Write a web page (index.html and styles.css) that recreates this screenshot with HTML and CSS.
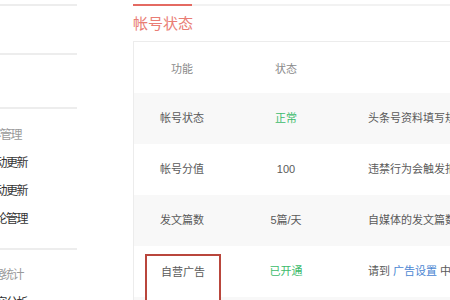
FILE: index.html
```html
<!DOCTYPE html>
<html>
<head>
    <meta charset="UTF-8">
    <title>帐号状态</title>
    <link rel="stylesheet" href="styles.css">
</head>
<body>
<div id="page">
    <div class="side">
        <div class="blank b1"></div>
        <div class="blank b2"></div>
        <div class="blank b3"></div>
        <div class="group">
            <p class="gtitle"><span>内容管理</span></p>
            <p class="item"><span>图文自动更新</span></p>
            <p class="item"><span>视频自动更新</span></p>
            <p class="item"><span>评论管理</span></p>
        </div>
        <div class="group last">
            <p class="gtitle"><span>数据统计</span></p>
            <p class="item"><span>内容分析</span></p>
        </div>
    </div>
    <div class="main">
        <div class="tabs">
            <span class="tab on"></span>
        </div>
        <h2 class="title">帐号状态</h2>
        <div class="card">
            <ul class="row head">
                <li class="c1">功能</li>
                <li class="c2">状态</li>
                <li class="c3"></li>
            </ul>
            <ul class="row gray">
                <li class="c1">帐号状态</li>
                <li class="c2 ok">正常</li>
                <li class="c3">头条号资料填写规范，帐号状态正常</li>
            </ul>
            <ul class="row">
                <li class="c1">帐号分值</li>
                <li class="c2">100</li>
                <li class="c3">违禁行为会触发扣分，分值过低将受限</li>
            </ul>
            <ul class="row gray">
                <li class="c1">发文篇数</li>
                <li class="c2">5篇/天</li>
                <li class="c3">自媒体的发文篇数每天上限</li>
            </ul>
            <ul class="row ad">
                <li class="c1"><span class="mark">自营广告</span></li>
                <li class="c2 ok">已开通</li>
                <li class="c3">请到 <a class="link">广告设置</a> 中进行设置</li>
            </ul>
            <ul class="row gray">
                <li class="c1"></li>
                <li class="c2"></li>
                <li class="c3"></li>
            </ul>
        </div>
    </div>
</div>
</body>
</html>
```

FILE: styles.css
```css
* {
    margin: 0;
    padding: 0;
    font-family: "Liberation Sans", "Noto Sans CJK SC", sans-serif;
}

li {
    list-style: none;
}

html, body {
    width: 450px;
    height: 300px;
    overflow: hidden;
    background: #fff;
}

#page {
    display: flex;
    width: 800px;
}

/* 左侧菜单 */
.side {
    width: 121px;
    margin-left: -44px;
    flex-shrink: 0;
}

.side .blank {
    border-bottom: 2px solid #ededed;
}

.side .b1 {
    height: 4px;
}

.side .b2 {
    height: 47px;
}

.side .b3 {
    height: 52px;
}

.side .group {
    padding-bottom: 15px;
    border-bottom: 2px solid #ededed;
}

.side .group.last {
    border-bottom: none;
}

.side .gtitle,
.side .item {
    display: flex;
    justify-content: flex-end;
    line-height: 28px;
    font-size: 12px;
    letter-spacing: -1.5px;
    white-space: nowrap;
}

.side .gtitle span,
.side .item span {
    flex-shrink: 0;
}

.side .gtitle {
    margin-top: 12px;
    padding-right: 56px;
    color: #9a9a9a;
}

.side .group.last .gtitle {
    margin-top: 11px;
    padding-right: 54px;
}

.side .item {
    padding-right: 50px;
    color: #333;
}

/* 右侧内容 */
.main {
    margin-left: 56px;
    width: 620px;
    flex-shrink: 0;
}

.tabs {
    display: flex;
    height: 4px;
    border-bottom: 2px solid #f2f2f2;
}

.tab.on {
    width: 59px;
    height: 4px;
    border-bottom: 2px solid #e46a62;
}

.title {
    height: 35px;
    line-height: 36px;
    font-size: 15px;
    font-weight: normal;
    color: #e97d74;
}

.card {
    border: 1px solid #ececec;
}

.row {
    display: flex;
    height: 51px;
    line-height: 51px;
    font-size: 11px;
    color: #5a5a5a;
}

.row.head {
    color: #8a8a8a;
    line-height: 55px;
}

.row.gray {
    background: #f8f8f8;
}

.row .c1 {
    width: 96px;
    text-align: center;
}

.row .c2 {
    width: 112px;
    text-align: center;
}

.row .c3 {
    flex: 1;
    padding-left: 26px;
    white-space: nowrap;
}

.row .ok {
    color: #3dbb6c;
}

.row .link {
    color: #4b86d2;
}

.row.ad .c1 {
    text-align: left;
}

.row .mark {
    display: block;
    width: 76px;
    height: 60px;
    margin: 8px 0 0 11px;
    border: 2px solid #b9463c;
    border-bottom: none;
    line-height: 1;
    padding-top: 11px;
    text-align: center;
    background: #fff;
    box-sizing: border-box;
}
```
